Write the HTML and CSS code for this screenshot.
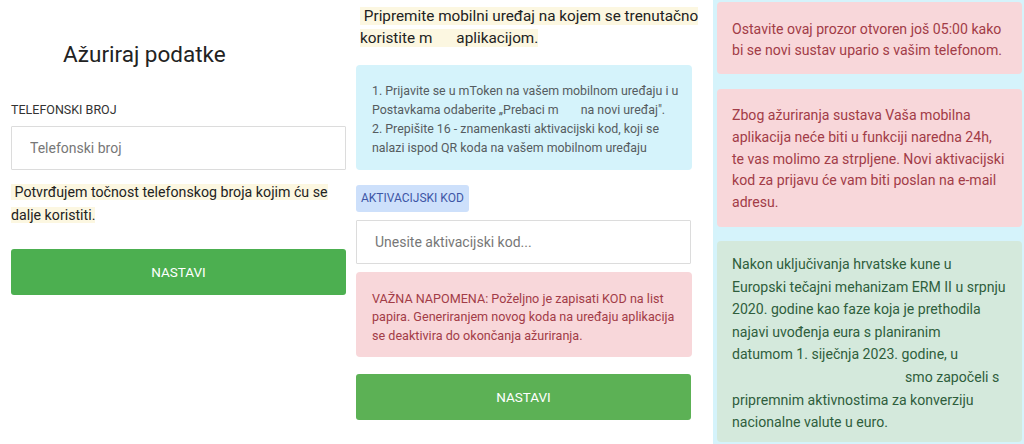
FILE: index.html
```html
<!DOCTYPE html>
<html lang="hr">
<head>
<meta charset="utf-8">
<title>Ažuriraj podatke</title>
<link rel="stylesheet" href="styles.css">
</head>
<body>
<div class="page">
  <section class="col col-left">
    <h2 class="title">Ažuriraj podatke</h2>
    <label class="label">TELEFONSKI BROJ</label>
    <input class="field" type="text" placeholder="Telefonski broj">
    <p class="note note-left"><span class="hl">&nbsp;Potvrđujem točnost telefonskog broja kojim ću se<br>dalje koristiti.</span></p>
    <button class="btn btn-a">NASTAVI</button>
  </section>

  <section class="col col-mid">
    <p class="note note-top"><span class="hl">&nbsp;Pripremite mobilni uređaj na kojem se trenutačno<br>koristite m<span class="gap g1"></span>aplikacijom.</span></p>
    <div class="info">1. Prijavite se u mToken na vašem mobilnom uređaju i u<br>Postavkama odaberite „Prebaci m<span class="gap g2"></span>na novi uređaj".<br>2. Prepišite 16 - znamenkasti aktivacijski kod, koji se<br>nalazi ispod QR koda na vašem mobilnom uređaju</div>
    <span class="badge">AKTIVACIJSKI KOD</span>
    <input class="field field-code" type="text" placeholder="Unesite aktivacijski kod...">
    <div class="warn">VAŽNA NAPOMENA: Poželjno je zapisati KOD na list<br>papira. Generiranjem novog koda na uređaju aplikacija<br>se deaktivira do okončanja ažuriranja.</div>
    <button class="btn btn-b">NASTAVI</button>
  </section>

  <aside class="col col-right">
    <div class="box box-red box-1">Ostavite ovaj prozor otvoren još 05:00 kako<br>bi se novi sustav upario s vašim telefonom.</div>
    <div class="box box-red box-2">Zbog ažuriranja sustava Vaša mobilna<br>aplikacija neće biti u funkciji naredna 24h,<br>te vas molimo za strpljene. Novi aktivacijski<br>kod za prijavu će vam biti poslan na e-mail<br>adresu.</div>
    <div class="box box-green">Nakon uključivanja hrvatske kune u<br>Europski tečajni mehanizam ERM II u srpnju<br>2020. godine kao faze koja je prethodila<br>najavi uvođenja eura s planiranim<br>datumom 1. siječnja 2023. godine, u<br><span class="gap g3"></span>smo započeli s<br>pripremnim aktivnostima za konverziju<br>nacionalne valute u euro.</div>
  </aside>
</div>
</body>
</html>
```

FILE: styles.css
```css
* { box-sizing: border-box; }
html, body { margin: 0; padding: 0; background: #fff; }
body {
  font-family: Roboto, "Noto Sans", sans-serif;
  color: #222;
  width: 1024px;
  height: 444px;
  overflow: hidden;
}
.page {
  display: flex;
  align-items: stretch;
  height: 444px;
}
.col { display: flex; flex-direction: column; }
.col-left { width: 335px; margin-left: 11px; }
.col-mid { width: 336px; margin-left: 10px; }
.col-right {
  width: 311px;
  margin-left: 21px;
  background: #d5f3fb;
  padding: 2px 2px 0 4px;
}

.title {
  font-size: 22.5px;
  font-weight: 400;
  margin: 38.5px 0 0 52px;
  line-height: 30px;
  color: #222;
}
.label {
  font-size: 12.5px;
  margin-top: 33.5px;
  line-height: 16px;
  color: #333;
}
.field {
  display: block;
  width: 335px;
  height: 44px;
  border: 1px solid #dcdcdc;
  border-radius: 1px;
  padding: 0 18px;
  font-family: inherit;
  font-size: 14px;
  color: #333;
  background: #fff;
  outline: none;
}
.col-left .field { margin-top: 8px; }
.field::placeholder { color: #777; }

.note {
  margin: 0;
  white-space: nowrap;
  color: #222;
}
.note-left {
  margin-top: 11px;
  font-size: 14.2px;
  line-height: 22.5px;
}
.hl { background: #fcf7e1; }
.note-top {
  margin-top: 4.5px;
  font-size: 15.3px;
  line-height: 22px;
  padding-left: 4px;
}
.gap { display: inline-block; }
.g1 { width: 24px; }
.g2 { width: 22px; }
.g3 { width: 173px; }

.btn {
  display: block;
  width: 335px;
  height: 46px;
  border: 0;
  border-radius: 3px;
  color: #fff;
  font-family: inherit;
  font-size: 13.5px;
  cursor: pointer;
}
.btn-a { background: #4caf50; margin-top: 23px; }
.btn-b { background: #5cb155; margin-top: 17px; }

.info {
  margin-top: 16.5px;
  background: #d5f3fb;
  border-radius: 4px;
  padding: 16px 6px 12px 16px;
  font-size: 12.4px;
  line-height: 19.1px;
  color: #555c60;
  height: 105px;
  white-space: nowrap;
}
.badge {
  align-self: flex-start;
  margin-top: 15px;
  background: #cde0fb;
  color: #3d56a6;
  font-size: 12px;
  line-height: 27px;
  padding: 0 5px;
  border-radius: 3px;
}
.field-code { margin-top: 8px; }
.warn {
  margin-top: 8px;
  background: #f8d7da;
  border-radius: 4px;
  padding: 17.5px 6px 10px 16px;
  font-size: 12.6px;
  line-height: 18.9px;
  color: #a23c47;
  height: 85px;
  white-space: nowrap;
}

.box {
  border-radius: 4px;
  padding: 16px 4px 10px 15px;
  font-size: 14.1px;
  white-space: nowrap;
}
.box-red { background: #f8d7da; color: #a23c47; }
.box-1 { height: 72px; padding-top: 17px; line-height: 20.7px; }
.box-2 { margin-top: 15px; height: 138px; padding-top: 16px; line-height: 21.8px; }
.box-green {
  margin-top: 14px;
  background: #d4e9dc;
  color: #2f5e3c;
  height: 201px;
  padding-top: 12px;
  line-height: 22.6px;
}
```
